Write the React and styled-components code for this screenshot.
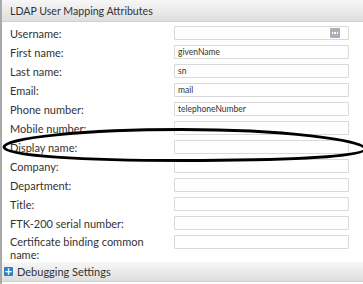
import React from "react";
import styled, { createGlobalStyle } from "styled-components";

const Global = createGlobalStyle`
  html, body { margin: 0; padding: 0; background: #fff; }
  body { font-family: Lato, "Open Sans", sans-serif; }
`;

const Panel = styled.div`
  position: relative;
  width: 361px;
  height: 284px;
  overflow: hidden;
  border-left: 2px solid #a9a9a9;
  background: #fff;
  display: flex;
  flex-direction: column;
`;

const Bar = styled.div`
  height: ${(p) => p.$h}px;
  flex: none;
  display: flex;
  align-items: center;
  gap: 4px;
  padding-left: ${(p) => p.$pad}px;
  background: linear-gradient(#f7f7f7, #dedede);
  border-bottom: 1px solid #d0d0d0;
  color: #333;
  font-size: ${(p) => p.$fs}px;
  box-sizing: border-box;
`;

const Form = styled.div`
  display: grid;
  grid-template-columns: 164px 175px;
  row-gap: 5px;
  padding: 4px 0 1px 8px;
`;

const Label = styled.div`
  font-size: 11px;
  line-height: 13px;
  color: #333;
  align-self: ${(p) => (p.$multi ? "start" : "center")};
`;

const Input = styled.div`
  position: relative;
  height: 14px;
  box-sizing: border-box;
  border: 1px solid #d9d9d9;
  border-radius: 1px;
  font-size: 8.5px;
  line-height: 12px;
  padding-left: 3px;
  color: #333;
  align-self: start;
`;

const DotsButton = styled.span`
  position: absolute;
  right: 8px;
  top: 1px;
  width: 10px;
  height: 10px;
  background: #a9b0bb;
  border-radius: 1px;
  display: flex;
  align-items: center;
  justify-content: center;
  gap: 1px;
`;

const Dot = styled.i`
  width: 1.5px;
  height: 1.5px;
  background: #fff;
`;

const PlusIcon = styled.span`
  width: 9px;
  height: 9px;
  background: #2a7fc4;
  border-radius: 1px;
  color: #fff;
  font-size: 10px;
  font-weight: bold;
  line-height: 9px;
  text-align: center;
  font-family: "DejaVu Sans", sans-serif;
`;

const Overlay = styled.svg`
  position: absolute;
  left: -2px;
  top: 0;
  pointer-events: none;
`;

const rows = [
  ["Username:", "", true],
  ["First name:", "givenName"],
  ["Last name:", "sn"],
  ["Email:", "mail"],
  ["Phone number:", "telephoneNumber"],
  ["Mobile number:", ""],
  ["Display name:", ""],
  ["Company:", ""],
  ["Department:", ""],
  ["Title:", ""],
  ["FTK-200 serial number:", ""],
];

export default function App() {
  return (
    <>
      <Global />
      <Panel>
        <Bar $h={22} $pad={8} $fs={10.6}>LDAP User Mapping Attributes</Bar>
        <Form>
          {rows.map(([label, value, dots]) => (
            <React.Fragment key={label}>
              <Label>{label}</Label>
              <Input>
                {value}
                {dots && (
                  <DotsButton>
                    <Dot />
                    <Dot />
                    <Dot />
                  </DotsButton>
                )}
              </Input>
            </React.Fragment>
          ))}
          <Label $multi>
            Certificate binding common
            <br />
            name:
          </Label>
          <Input />
        </Form>
        <Bar $h={20} $pad={2} $fs={11}>
          <PlusIcon>+</PlusIcon>
          Debugging Settings
        </Bar>
        <Overlay width="366" height="284" viewBox="0 0 366 284">
          <path
            d="M4,147 C4,138 84,129.5 182,129.5 C282,129.5 365,140 365,149 C365,157 282,160.5 182,160.5 C84,160.5 4,156 4,147 Z"
            fill="none"
            stroke="#000"
            strokeWidth="3"
          />
        </Overlay>
      </Panel>
    </>
  );
}
